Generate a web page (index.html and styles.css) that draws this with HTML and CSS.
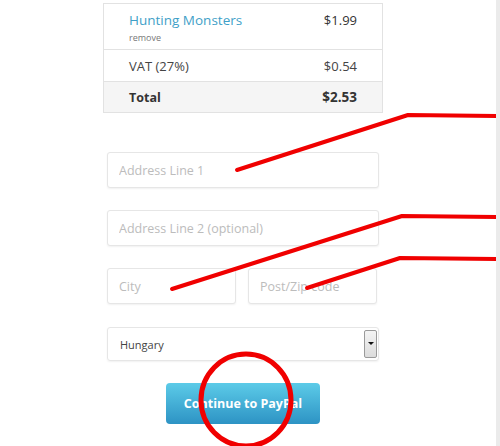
FILE: index.html
```html
<!DOCTYPE html>
<html lang="en">
<head>
    <meta charset="UTF-8">
    <title>Checkout</title>
    <link rel="stylesheet" href="styles.css">
</head>
<body>
    <div class="page">
        <div class="cart">
            <div class="row item">
                <div>
                    <a href="#" class="title">Hunting Monsters</a>
                    <a href="#" class="remove">remove</a>
                </div>
                <div class="price">$1.99</div>
            </div>
            <div class="row vat">
                <div>VAT (27%)</div>
                <div class="price">$0.54</div>
            </div>
            <div class="row total">
                <div>Total</div>
                <div class="price">$2.53</div>
            </div>
        </div>

        <form class="address">
            <input type="text" placeholder="Address Line 1">
            <input type="text" placeholder="Address Line 2 (optional)">
            <div class="split">
                <input type="text" class="city" placeholder="City">
                <input type="text" class="zip" placeholder="Post/Zip code">
            </div>
            <div class="country">
                <select>
                    <option>Hungary</option>
                </select>
                <span class="arrow"></span>
            </div>
            <button type="button">Continue to PayPal</button>
        </form>
    </div>

    <!-- marker scribbles drawn over the screenshot -->
    <svg class="marks" width="500" height="446" viewBox="0 0 500 446">
        <g fill="none" stroke="#f00000" stroke-width="4" stroke-linecap="round" stroke-linejoin="round">
            <polyline points="237,170 408,115 497,116"/>
            <polyline points="172,289 402,216 497,217"/>
            <polyline points="307,288 400,258 497,259"/>
            <ellipse cx="246" cy="400" rx="45" ry="46" stroke-width="5"/>
        </g>
    </svg>
    <div class="edge"></div>
</body>
</html>
```

FILE: styles.css
```css
body {
    margin: 0;
    font-family: "Open Sans", "Liberation Sans", sans-serif;
    color: #333;
    background: #fff;
}
.page {
    width: 280px;
    padding: 3px 0 0 103px;
}
.cart {
    width: 278px;
    border: 1px solid #e2e2e2;
    font-size: 13px;
}
.row {
    display: flex;
    justify-content: space-between;
    padding: 0 25px;
    border-top: 1px solid #e2e2e2;
}
.row.item {
    border-top: none;
    height: 45px;
    padding-top: 7px;
    box-sizing: border-box;
}
.item .title {
    display: block;
    color: #3f9fc8;
    text-decoration: none;
    font-size: 13.5px;
    line-height: 18px;
}
.item .remove {
    display: block;
    color: #777;
    font-size: 9px;
    text-decoration: none;
    margin-top: 2px;
}
.item .price {
    line-height: 18px;
}
.vat {
    height: 31px;
    align-items: center;
    color: #444;
}
.total {
    height: 30px;
    align-items: center;
    background: #f5f5f5;
    font-weight: bold;
    color: #333;
    font-size: 12.5px;
}
.total .price {
    font-size: 13.5px;
}
.address {
    width: 272px;
    margin: 39px 0 0 4px;
    display: flex;
    flex-direction: column;
}
input {
    box-sizing: border-box;
    height: 36px;
    margin: 0 0 22px;
    padding: 0 11px;
    border: 1px solid #e6e6e6;
    border-radius: 3px;
    box-shadow: 0 1px 2px rgba(0, 0, 0, 0.06);
    font-family: inherit;
    font-size: 12.5px;
    color: #333;
}
input::placeholder {
    color: #bcbcbc;
}
.split {
    display: flex;
    gap: 12px;
}
.split input {
    width: 129px;
    margin-bottom: 23px;
}
.country {
    display: flex;
    align-items: center;
    width: 270px;
    height: 32px;
    border: 1px solid #e6e6e6;
    border-radius: 3px;
    box-shadow: 0 1px 2px rgba(0, 0, 0, 0.06);
}
.country select {
    flex: 1;
    height: 30px;
    appearance: none;
    border: none;
    background: transparent;
    padding: 0 12px;
    font-family: inherit;
    font-size: 11px;
    color: #444;
}
.arrow {
    position: relative;
    width: 11px;
    height: 26px;
    margin-right: 1px;
    border: 1px solid #9a9a9a;
    border-radius: 2px;
    background: linear-gradient(#f4f4f4, #dcdcdc);
}
.arrow::after {
    content: "";
    position: absolute;
    left: 3px;
    top: 11px;
    border-left: 3px solid transparent;
    border-right: 3px solid transparent;
    border-top: 3px solid #111;
}
button {
    align-self: center;
    width: 154px;
    height: 41px;
    margin-top: 22px;
    border: none;
    border-radius: 4px;
    background: linear-gradient(#5ccbe8, #2d93c4);
    color: #fff;
    font-family: inherit;
    font-weight: bold;
    font-size: 12.5px;
    cursor: pointer;
}
.marks {
    position: absolute;
    left: 0;
    top: 0;
}
.edge {
    position: absolute;
    right: 0;
    top: 0;
    width: 4px;
    height: 446px;
    background: #ebebeb;
}
```
